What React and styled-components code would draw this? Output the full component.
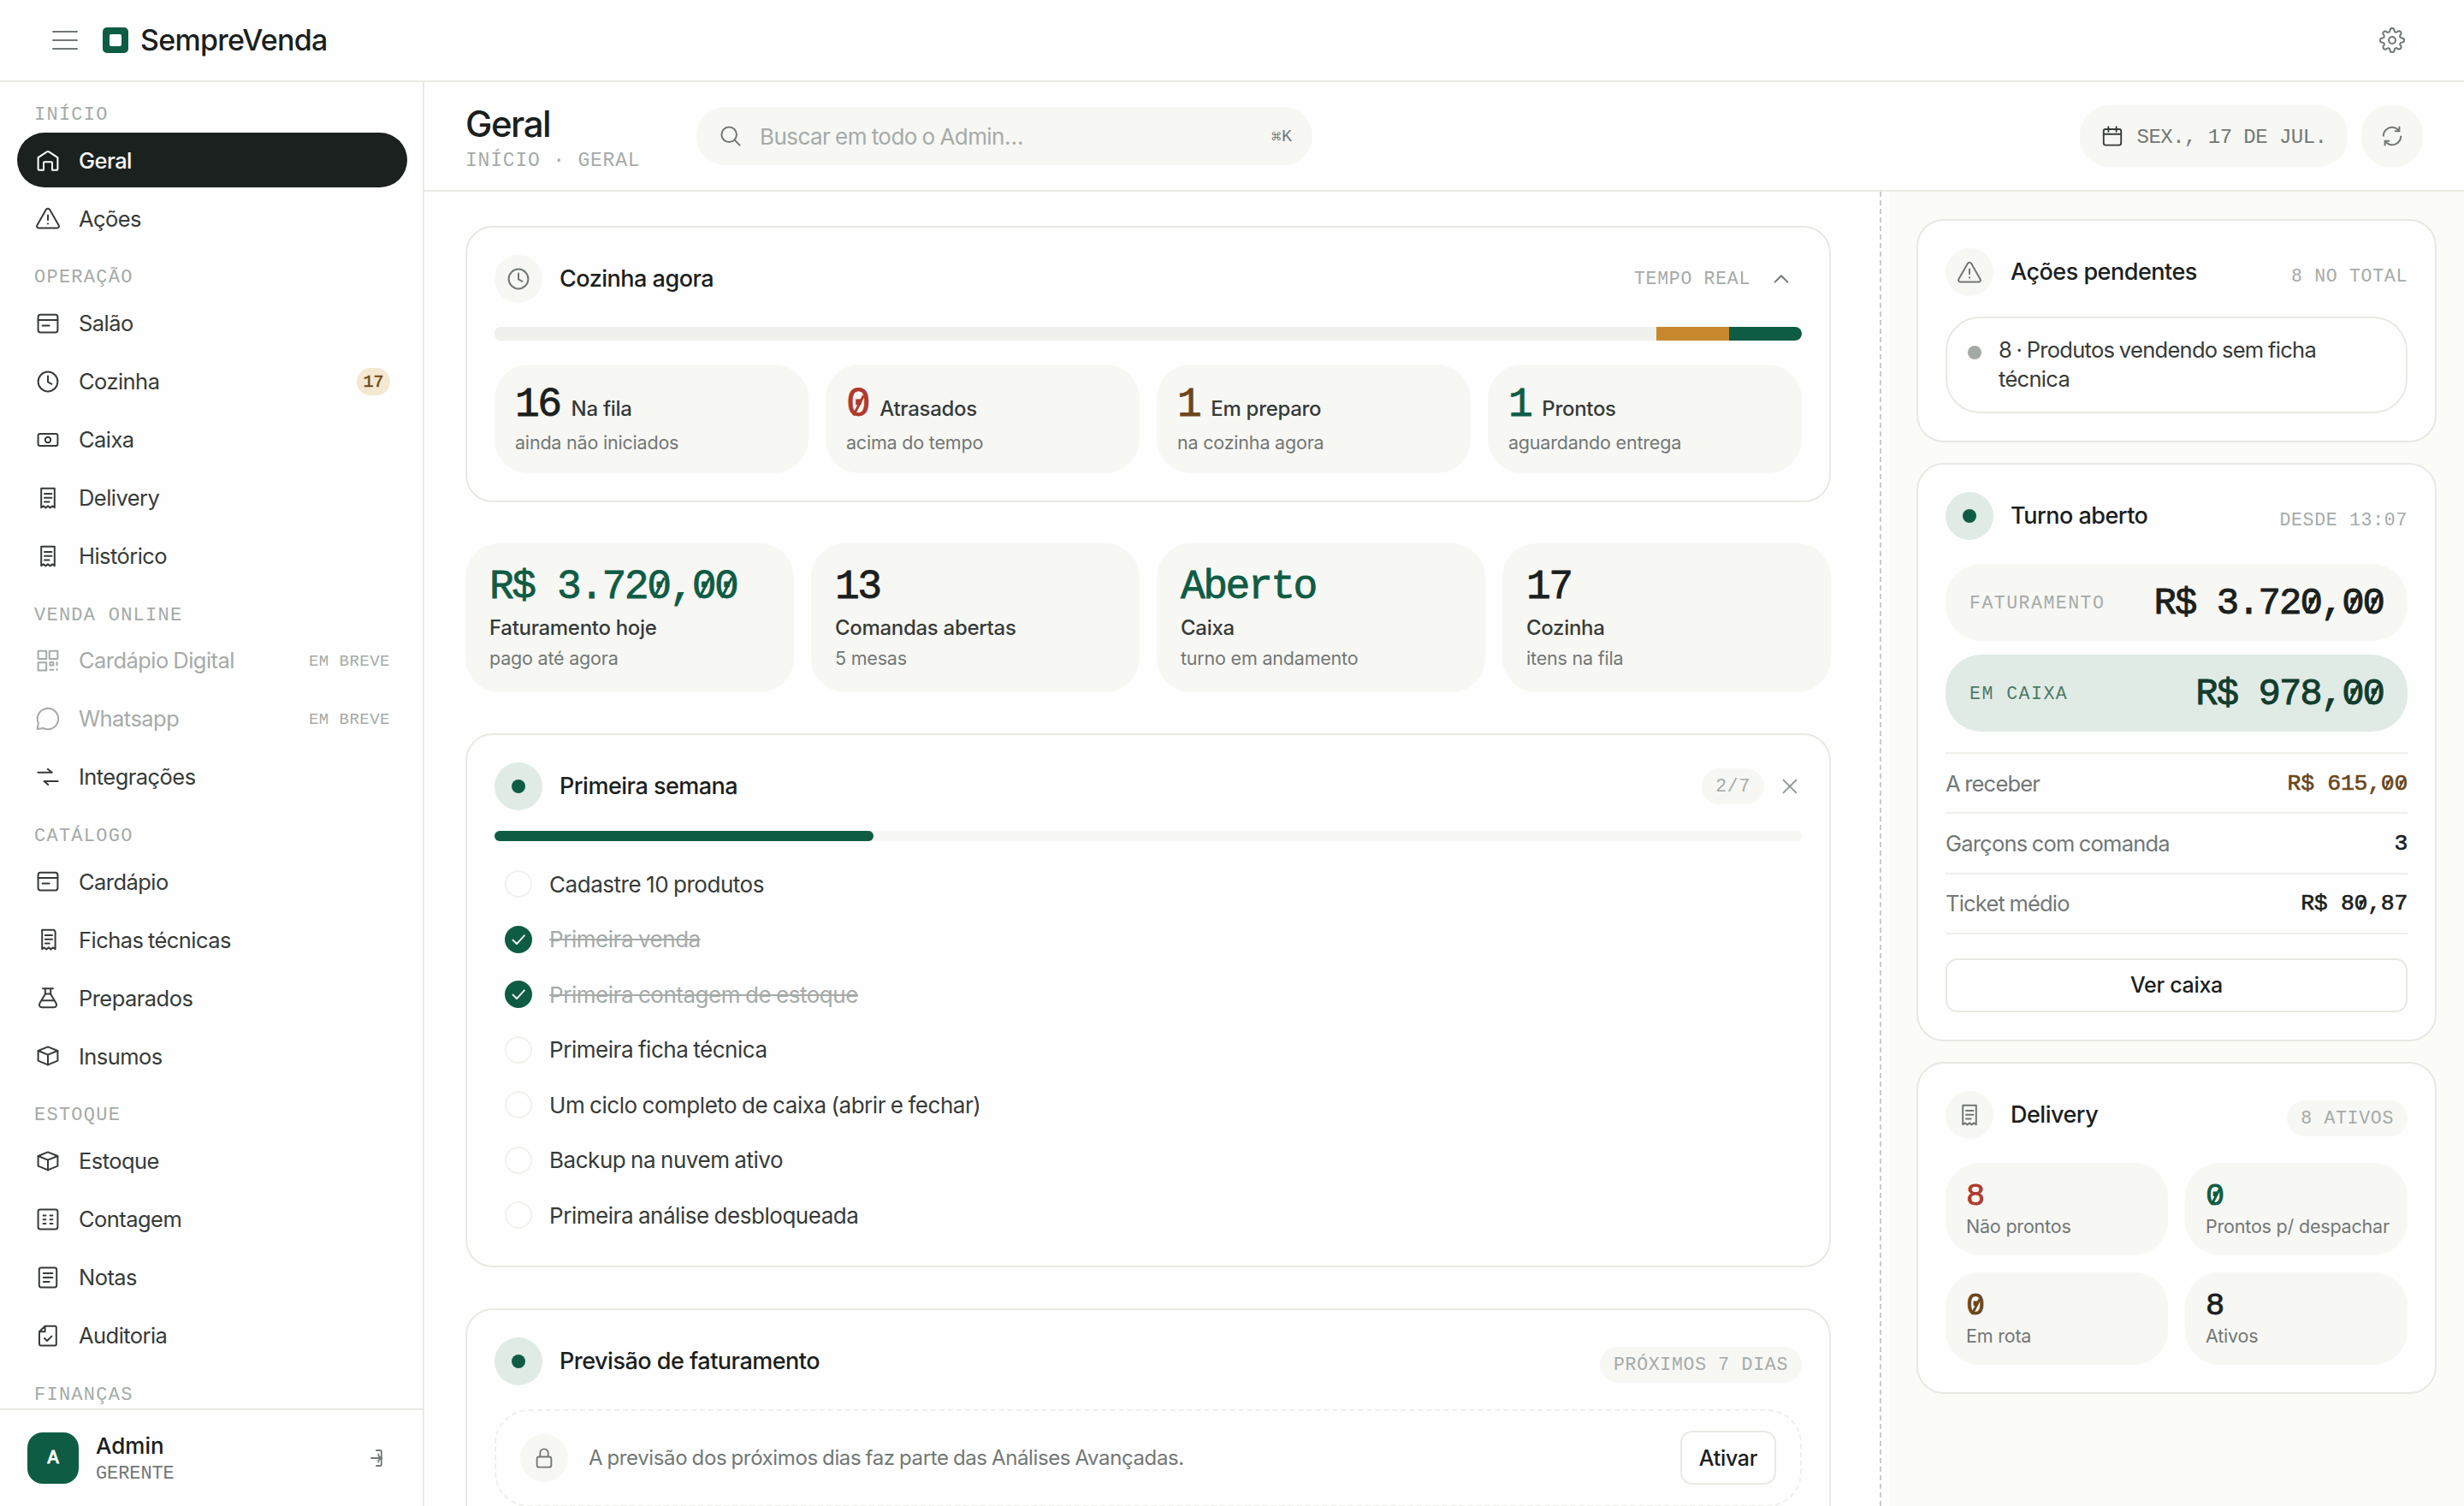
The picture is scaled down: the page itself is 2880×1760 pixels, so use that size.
import React from 'react';
import styled, { createGlobalStyle, css } from 'styled-components';

const color = {
  page: '#fefefe',
  ink: '#1a201d',
  text: '#363b38',
  muted: '#727875',
  faint: '#a5aba8',
  line: '#e9e9e3',
  surface: '#f7f7f4',
  side: '#fbfcf8',
  green: '#0f5c45',
  greenDark: '#123d2e',
  greenTint: '#e0ebe5',
  amber: '#c8872d',
  brown: '#6b471a',
  red: '#b03a2e',
};

const sans = `Inter, 'Liberation Sans', sans-serif`;
const mono = `'Liberation Mono', 'DejaVu Sans Mono', monospace`;

const GlobalStyle = createGlobalStyle`
  * { box-sizing: border-box; }
  body {
    margin: 0;
    background: ${color.page};
    color: ${color.ink};
    font-family: ${sans};
    overflow: hidden;
  }
  button { font-family: inherit; cursor: pointer; }
`;

/* ---------- Icons ---------- */

const Svg = styled.svg`
  display: block;
  flex: none;
  fill: none;
  stroke: currentColor;
  stroke-width: ${(p) => p.$stroke || 2};
  stroke-linecap: round;
  stroke-linejoin: round;
`;

const shapes = {
  home: <path d="M2.6 11.2 12.8 4.4a2.2 2.2 0 0 1 2.4 0l10.2 6.8V24.6a1.2 1.2 0 0 1-1.2 1.2H19V17.2a1 1 0 0 0-1-1h-8a1 1 0 0 0-1 1v8.6H3.8a1.2 1.2 0 0 1-1.2-1.2Z" />,
  alert: (
    <>
      <path d="M11.8 4 1.4 22.3a2.2 2.2 0 0 0 1.9 3.3h21.4a2.2 2.2 0 0 0 1.9-3.3L16.2 4a2.5 2.5 0 0 0-4.4 0Z" />
      <path d="M14 10.5v5.5M14 20.2v.2" />
    </>
  ),
  card: (
    <>
      <rect x="2.6" y="3.8" width="22.8" height="20.6" rx="2.6" />
      <path d="M2.6 10h22.8M7.6 16.4h8" />
    </>
  ),
  clock: (
    <>
      <circle cx="14" cy="14" r="11.4" />
      <path d="M14 7.4v7l4.4 2.4" />
    </>
  ),
  cash: (
    <>
      <rect x="2.6" y="7" width="22.8" height="14" rx="2" />
      <circle cx="14" cy="14" r="3.2" />
    </>
  ),
  receipt: (
    <>
      <path d="M6.2 2.8h15.6v22.4l-2.6-1.8-2.6 2-2.6-2-2.6 2-2.6-2-2.6 1.8Z" />
      <path d="M10 9h8.4M10 13.8h8.4M10 18.6h5.6" />
    </>
  ),
  recipe: (
    <>
      <path d="M7.2 2.8H20a2.6 2.6 0 0 1 2.6 2.6v19.8L20 23.4l-2.6 2-2.6-2-2.6 2-2.4-2-2.6 1.8Z" />
      <path d="M10.8 9h8.2M10.8 13.8h8.2M10.8 18.6h5" />
    </>
  ),
  qr: (
    <>
      <path d="M2.6 2.8h9.6v9.2H2.6ZM15.8 2.8h9.6v9.2h-9.6ZM2.6 16.2h9.6v9.2H2.6Z" />
      <path d="M16.4 16h4v3.4h-4ZM16.4 24.8h4M24.6 16v3.6M24.6 24v1" />
    </>
  ),
  chat: <path d="M1.6 26 2.9 19.2A12.2 12.2 0 1 1 8.6 25Z" />,
  swap: <path d="M2.4 8.8h16.4l-5-4M25.6 19H9.6l4.6 4" />,
  flask: (
    <>
      <path d="M8 3.2h12M10.8 3.2v6.6L4.4 20.6a3 3 0 0 0 2.6 4.6h14a3 3 0 0 0 2.6-4.6L17.2 9.8V3.2" />
      <path d="M10.8 9.6h6.4M7.4 17.2h13.2" />
    </>
  ),
  box: (
    <>
      <path d="M14 3.4 25.4 8v11.6L14 24.4 2.6 19.6V8Z" />
      <path d="M2.6 8 14 12.6 25.4 8M14 12.6v11.8" />
    </>
  ),
  count: (
    <>
      <rect x="2.6" y="2.6" width="22.8" height="22.8" rx="2.4" />
      <path d="M8.6 9.4h2.8M16.6 9.4h2.8M8.6 14.2h2.8M16.6 14.2h2.8M8.6 19h2.8M16.6 19h2.8" />
    </>
  ),
  notes: (
    <>
      <rect x="3.8" y="2.6" width="20.4" height="22.8" rx="2.4" />
      <path d="M8.8 9h10.6M8.8 14h10.6M8.8 19h6.8" />
    </>
  ),
  audit: (
    <>
      <path d="M10.6 2.8h11.8a1.4 1.4 0 0 1 1.4 1.4v19.8a1.4 1.4 0 0 1-1.4 1.4H5.4A1.4 1.4 0 0 1 4 24V9.2ZM10.6 2.8v6.4H4" />
      <path d="m10 17 3 3 5.4-5.4" />
    </>
  ),
  search: (
    <>
      <circle cx="12.2" cy="12.2" r="8.8" />
      <path d="m18.8 18.8 5.8 5.8" />
    </>
  ),
  calendar: (
    <>
      <rect x="3" y="5.4" width="22" height="20" rx="2.4" />
      <path d="M3 11.6h22M9 2.4v6M19 2.4v6" />
    </>
  ),
  refresh: (
    <>
      <path d="M3.8 13.6A10.2 10.2 0 0 1 20.6 6.2l1.6 1.6M24.2 14.4A10.2 10.2 0 0 1 7.4 21.8l-1.6-1.6" />
      <path d="M22.4 3.4v4.8h-4.6M5.6 24.6v-4.8h4.6" />
    </>
  ),
  lock: (
    <>
      <rect x="5" y="12.4" width="18" height="13" rx="2.6" />
      <path d="M9 12.2V7.6a5 5 0 0 1 10 0v4.6" />
    </>
  ),
  check: <path d="m7 14.6 4.8 4.8L21.4 9" />,
  chevronUp: <path d="m6.6 17.6 7.4-7.4 7.4 7.4" />,
  close: <path d="m6 6 16 16M22 6 6 22" />,
  menu: <path d="M0 4h28M0 14h28M0 24h28" />,
  logout: <path d="M18 5h4.6a1.2 1.2 0 0 1 1.2 1.2v15.6a1.2 1.2 0 0 1-1.2 1.2H18M12 14h12.4M20.4 9.4v2l3.8 2.6-3.8 2.6v2" />,
  gear: (
    <g transform="translate(-.28 -.28) scale(1.19)">
      <circle cx="12" cy="12" r="3.1" />
      <path d="M19.4 15a1.65 1.65 0 0 0 .33 1.82l.06.06a2 2 0 0 1 0 2.83 2 2 0 0 1-2.83 0l-.06-.06a1.65 1.65 0 0 0-1.82-.33 1.65 1.65 0 0 0-1 1.51V21a2 2 0 0 1-2 2 2 2 0 0 1-2-2v-.09A1.65 1.65 0 0 0 9 19.4a1.65 1.65 0 0 0-1.82.33l-.06.06a2 2 0 0 1-2.83 0 2 2 0 0 1 0-2.83l.06-.06a1.65 1.65 0 0 0 .33-1.82 1.65 1.65 0 0 0-1.51-1H3a2 2 0 0 1-2-2 2 2 0 0 1 2-2h.09A1.65 1.65 0 0 0 4.6 9a1.65 1.65 0 0 0-.33-1.82l-.06-.06a2 2 0 0 1 0-2.83 2 2 0 0 1 2.83 0l.06.06a1.65 1.65 0 0 0 1.82.33H9a1.65 1.65 0 0 0 1-1.51V3a2 2 0 0 1 2-2 2 2 0 0 1 2 2v.09a1.65 1.65 0 0 0 1 1.51 1.65 1.65 0 0 0 1.82-.33l.06-.06a2 2 0 0 1 2.83 0 2 2 0 0 1 0 2.83l-.06.06a1.65 1.65 0 0 0-.33 1.82V9a1.65 1.65 0 0 0 1.51 1H21a2 2 0 0 1 2 2 2 2 0 0 1-2 2h-.09a1.65 1.65 0 0 0-1.51 1z" />
    </g>
  ),
};

const Icon = ({ name, size = 28, stroke }) => (
  <Svg width={size} height={size} viewBox="0 0 28 28" $stroke={stroke} overflow="visible">
    {shapes[name]}
  </Svg>
);

/* ---------- Slashed zero for money and counters ---------- */

const Zero = styled.span`
  position: relative;

  &::after {
    content: '';
    position: absolute;
    top: 50%;
    left: 0.27em;
    width: 0.07em;
    height: 0.54em;
    margin-top: -0.24em;
    background: currentColor;
    transform: rotate(27deg);
  }
`;

const Digits = ({ children }) =>
  String(children)
    .split(/(0)/)
    .filter(Boolean)
    .map((part, i) => (part === '0' ? <Zero key={i}>0</Zero> : part));

/* ---------- Top bar ---------- */

const Shell = styled.div`
  display: flex;
  flex-direction: column;
  width: 2880px;
  height: 1760px;
  overflow: hidden;
`;

const TopBar = styled.header`
  display: flex;
  align-items: center;
  height: 96px;
  padding: 0 69px 0 62px;
  border-bottom: 2px solid ${color.line};
  color: ${color.muted};
`;

const LogoMark = styled.div`
  display: flex;
  align-items: center;
  justify-content: center;
  width: 30px;
  height: 30px;
  margin-left: 30px;
  border-radius: 5px;
  background: ${color.green};

  &::after {
    content: '';
    width: 14px;
    height: 14px;
    border-radius: 2px;
    background: #fff;
  }
`;

const Brand = styled.span`
  flex: 1;
  margin-left: 14px;
  color: ${color.ink};
  font-size: 34px;
  font-weight: 500;
  line-height: 40px;
  letter-spacing: -0.75px;
`;

const Body = styled.div`
  display: flex;
  flex: 1;
  min-height: 0;
`;

/* ---------- Sidebar ---------- */

const Sidebar = styled.aside`
  display: flex;
  flex-direction: column;
  width: 496px;
  border-right: 2px solid ${color.line};
`;

const Nav = styled.nav`
  flex: 1;
  min-height: 0;
  padding: 0.8px 18px 0 20px;
  overflow: hidden;
`;

const NavLabel = styled.div`
  height: 58.4px;
  padding: 24px 0 0 20px;
  color: ${color.faint};
  font-family: ${mono};
  font-size: 22px;
  line-height: 28px;
  letter-spacing: 1.25px;
`;

const NavList = styled.div`
  display: flex;
  flex-direction: column;
  gap: 4px;
`;

const NavItem = styled.a`
  display: flex;
  align-items: center;
  gap: 22px;
  height: 64px;
  padding: 0 20px 0 22px;
  border-radius: 32px;
  color: ${color.text};
  font-size: 25.5px;
  letter-spacing: -0.55px;
  word-spacing: -1px;
  ${(p) => p.$active && css`
    background: #1a211e;
    color: #fff;
    font-weight: 500;
  `}
  ${(p) => p.$soon && css`
    color: ${color.faint};
  `}
`;

const NavText = styled.span`
  flex: 1;
`;

const NavCount = styled.span`
  display: flex;
  align-items: center;
  justify-content: center;
  width: 39px;
  height: 32px;
  padding-top: 1px;
  border-radius: 16px;
  background: #f5e8d0;
  color: ${color.brown};
  font-family: ${mono};
  font-size: 20px;
  letter-spacing: 0;
  -webkit-text-stroke: 0.5px;
`;

const NavSoon = styled.span`
  padding-top: 2px;
  font-family: ${mono};
  font-size: 19px;
  letter-spacing: 0.48px;
  word-spacing: 0;
`;

const UserBar = styled.div`
  display: flex;
  align-items: center;
  height: 114px;
  padding: 0 44px 0 32px;
  border-top: 2px solid ${color.line};
  color: ${color.muted};
`;

const Avatar = styled.div`
  display: flex;
  align-items: center;
  justify-content: center;
  width: 60px;
  height: 60px;
  border-radius: 18px;
  background: ${color.green};
  color: #fff;
  font-family: ${mono};
  font-size: 22px;
  -webkit-text-stroke: 0.9px;
`;

const UserInfo = styled.div`
  flex: 1;
  margin-left: 20px;
  padding-top: 3px;
`;

const UserName = styled.div`
  color: ${color.ink};
  font-size: 26px;
  font-weight: 500;
  line-height: 34px;
`;

const UserRole = styled.div`
  font-family: ${mono};
  font-size: 22px;
  line-height: 32px;
  letter-spacing: -0.1px;
`;

/* ---------- Page header ---------- */

const Page = styled.main`
  display: flex;
  flex: 1;
  flex-direction: column;
  min-width: 0;
`;

const PageHeader = styled.div`
  display: flex;
  align-items: center;
  height: 128px;
  padding: 0 48px;
  border-bottom: 2px solid ${color.line};
`;

const Heading = styled.div`
  width: 270px;
  padding-top: 9px;
`;

const PageTitle = styled.h1`
  margin: 0;
  font-size: 42px;
  font-weight: 500;
  line-height: 48px;
  letter-spacing: -1.5px;
`;

const Crumbs = styled.div`
  color: ${color.faint};
  font-family: ${mono};
  font-size: 23px;
  line-height: 38px;
  letter-spacing: 0.8px;
`;

const SearchBox = styled.div`
  display: flex;
  align-items: center;
  gap: 20px;
  width: 720px;
  height: 68px;
  margin-right: auto;
  padding: 0 24px 0 26px;
  border-radius: 34px;
  background: ${color.surface};
  color: ${color.muted};
`;

const SearchHint = styled.span`
  flex: 1;
  color: ${color.faint};
  font-size: 26px;
  letter-spacing: -0.55px;
  word-spacing: -1px;
`;

const Shortcut = styled.kbd`
  display: flex;
  align-items: center;
  font-family: ${mono};
  font-size: 20px;

  span {
    font-family: 'DejaVu Sans', sans-serif;
    font-size: 13px;
  }
`;

const HeaderPill = styled.div`
  display: flex;
  align-items: center;
  justify-content: center;
  gap: 16px;
  width: ${(p) => p.$width}px;
  height: 72px;
  border-radius: 34px;
  background: ${color.surface};
  color: ${color.muted};

  & + & {
    margin-left: 16px;
  }
`;

const DateText = styled.span`
  padding-top: 2px;
  font-family: ${mono};
  font-size: 24px;
  letter-spacing: -0.54px;
`;

const Dark = styled.span`
  color: ${color.text};
`;

/* ---------- Columns and cards ---------- */

const Columns = styled.div`
  display: flex;
  flex: 1;
  min-height: 0;
`;

const MainColumn = styled.section`
  display: flex;
  flex-direction: column;
  gap: 48px;
  width: 1692px;
  padding: 40px 48px 0;
  overflow: hidden;
`;

const Resizer = styled.div`
  display: flex;
  justify-content: center;
  width: 20px;

  &::after {
    content: '';
    width: 2px;
    background: repeating-linear-gradient(#c9ccca 0 6px, transparent 6px 10px);
  }
`;

const SideColumn = styled.aside`
  display: flex;
  flex: 1;
  flex-direction: column;
  gap: 24px;
  padding: 32px;
  background: ${color.side};
`;

const Card = styled.article`
  flex: none;
  padding: 32px 32px ${(p) => p.$bottom || 32}px;
  border: 2px solid ${color.line};
  border-radius: 32px;
  background: ${color.page};
`;

const CardHead = styled.div`
  display: flex;
  align-items: center;
  height: 56px;
`;

const CardIcon = styled.div`
  display: flex;
  flex: none;
  align-items: center;
  justify-content: center;
  width: 56px;
  height: 56px;
  border-radius: 50%;
  background: ${(p) => (p.$live ? color.greenTint : color.surface)};
  color: ${color.muted};
`;

const LiveDot = styled.span`
  width: 16px;
  height: 16px;
  border-radius: 50%;
  background: ${color.green};
`;

const CardTitle = styled.h2`
  flex: 1;
  margin: 0 0 1px 20px;
  font-size: 27px;
  font-weight: 500;
  letter-spacing: -0.5px;
`;

const CardMeta = styled.span`
  margin-top: ${(p) => p.$drop || 0}px;
  color: ${color.faint};
  font-family: ${mono};
  font-size: 21.5px;
  letter-spacing: 0.7px;
  white-space: nowrap;
  ${(p) => p.$pill && css`
    padding: 1px 16px 0;
    border-radius: 21px;
    background: ${color.surface};
    line-height: 41px;
  `}
`;

const IconButton = styled.button`
  display: flex;
  align-items: center;
  justify-content: center;
  width: ${(p) => p.$size}px;
  height: ${(p) => p.$size}px;
  margin-left: ${(p) => p.$gap}px;
  padding: 0;
  border: none;
  background: transparent;
  color: ${(p) => p.$tone || color.muted};
`;

const StackBar = styled.div`
  display: flex;
  height: 16px;
  margin: 28px 0;
  border-radius: 8px;
  background: #f0f0ec;
  overflow: hidden;
`;

const Segment = styled.div`
  flex: ${(p) => p.$share};
  background: ${(p) => p.$tone};
`;

const Grid = styled.div`
  display: grid;
  grid-template-columns: repeat(${(p) => p.$cols}, minmax(0, 1fr));
  gap: 20px;
  margin-top: ${(p) => p.$top || 0}px;
`;

const Tile = styled.div`
  height: ${(p) => p.$height}px;
  padding: ${(p) => p.$pad};
  border-radius: 40px;
  background: ${color.surface};
  white-space: nowrap;
`;

const Figure = styled.div`
  color: ${(p) => p.$tone || color.ink};
  font-family: ${mono};
  font-size: ${(p) => p.$size || 48}px;
  line-height: ${(p) => (p.$size ? 40 : 48)}px;
  letter-spacing: ${(p) => (p.$size ? 0 : -2.5)}px;
  -webkit-text-stroke: 0.8px;
`;

const FigureRow = styled.div`
  display: flex;
  align-items: baseline;
  gap: 13px;
`;

const TileLabel = styled.div`
  margin-top: ${(p) => p.$gap || 0}px;
  color: ${color.text};
  font-size: 24px;
  font-weight: 500;
  line-height: 32px;
  letter-spacing: -0.3px;
`;

const TileNote = styled.div`
  margin-top: ${(p) => p.$gap || 0}px;
  color: ${color.muted};
  font-size: 21.5px;
  line-height: 30px;
  letter-spacing: -0.2px;
`;

/* ---------- First week checklist ---------- */

const Progress = styled.div`
  height: 12px;
  margin: 24px 0 18px;
  border-radius: 6px;
  background: ${color.surface};
`;

const ProgressFill = styled.div`
  width: 29%;
  height: 12px;
  border-radius: 6px;
  background: ${color.green};
`;

const Task = styled.div`
  display: flex;
  align-items: center;
  gap: 20px;
  height: 64.5px;
  padding-left: 12px;
  color: ${(p) => (p.$done ? color.faint : color.text)};
  font-size: 26px;
  letter-spacing: -0.46px;
  word-spacing: -1px;
  text-decoration: ${(p) => (p.$done ? 'line-through' : 'none')};
`;

const TaskMark = styled.span`
  display: flex;
  align-items: center;
  justify-content: center;
  width: 32px;
  height: 32px;
  border: 2px solid ${(p) => (p.$done ? color.green : '#f1f1ed')};
  border-radius: 50%;
  background: ${(p) => (p.$done ? color.green : 'transparent')};
  color: #fff;
`;

const LockedBox = styled.div`
  display: flex;
  align-items: center;
  height: 114px;
  margin-top: 28px;
  padding: 0 28px;
  border: 2px dashed #efefeb;
  border-radius: 40px;
`;

const LockedText = styled.p`
  flex: 1;
  margin: 0 0 0 24px;
  color: ${color.muted};
  font-size: 24px;
  letter-spacing: -0.38px;
  word-spacing: -1px;
`;

const OutlineButton = styled.button`
  width: ${(p) => p.$width};
  height: 63px;
  border: 2px solid ${color.line};
  border-radius: 14px;
  background: #fff;
  color: ${color.ink};
  font-size: 25px;
  font-weight: 500;
  letter-spacing: -0.3px;
`;

/* ---------- Side column parts ---------- */

const PendingItem = styled.div`
  display: flex;
  align-items: flex-start;
  gap: 20px;
  height: 113px;
  margin-top: 24px;
  padding: 20px 24px;
  border: 2px solid ${color.line};
  border-radius: 40px;
  color: ${color.text};
  font-size: 25.5px;
  line-height: 34px;
  letter-spacing: -0.7px;
  word-spacing: -1px;
`;

const PendingDot = styled.span`
  flex: none;
  width: 16px;
  height: 16px;
  margin-top: 12px;
  border-radius: 50%;
  background: #a3aaa6;
`;

const Amount = styled.div`
  display: flex;
  align-items: center;
  justify-content: space-between;
  height: 90px;
  margin-top: ${(p) => p.$gap}px;
  padding: 2px 28px 0;
  border-radius: 42px;
  background: ${(p) => (p.$strong ? color.greenTint : color.surface)};
  color: ${(p) => (p.$strong ? color.greenDark : color.ink)};
`;

const AmountLabel = styled.span`
  color: ${(p) => (p.$strong ? '#4d7a68' : color.faint)};
  font-family: ${mono};
  font-size: 21.5px;
  letter-spacing: 1.5px;
`;

const AmountValue = styled.span`
  font-family: ${mono};
  font-size: 44px;
  line-height: 50px;
  letter-spacing: -2px;
  -webkit-text-stroke: 0.9px;
`;

const Facts = styled.dl`
  margin: 24px 0 28px;
  border-top: 2px solid #efefeb;
`;

const Fact = styled.div`
  display: flex;
  align-items: center;
  justify-content: space-between;
  height: 70.33px;
  border-bottom: 2px solid #efefeb;
`;

const FactName = styled.dt`
  color: ${color.muted};
  font-size: 25.5px;
  letter-spacing: -0.8px;
  word-spacing: -1px;
`;

const FactValue = styled.dd`
  margin: 0;
  padding-top: 1px;
  color: ${(p) => p.$tone || color.ink};
  font-family: ${mono};
  font-size: 26.5px;
  letter-spacing: -0.3px;
  -webkit-text-stroke: 0.6px;
`;

const sections = [
  { label: 'INÍCIO', items: [['home', 'Geral', { active: true }], ['alert', 'Ações']] },
  {
    label: 'OPERAÇÃO',
    items: [
      ['card', 'Salão'],
      ['clock', 'Cozinha', { count: 17 }],
      ['cash', 'Caixa'],
      ['receipt', 'Delivery'],
      ['receipt', 'Histórico'],
    ],
  },
  {
    label: 'VENDA ONLINE',
    items: [
      ['qr', 'Cardápio Digital', { soon: true }],
      ['chat', 'Whatsapp', { soon: true }],
      ['swap', 'Integrações'],
    ],
  },
  {
    label: 'CATÁLOGO',
    items: [
      ['card', 'Cardápio'],
      ['recipe', 'Fichas técnicas'],
      ['flask', 'Preparados'],
      ['box', 'Insumos'],
    ],
  },
  {
    label: 'ESTOQUE',
    items: [
      ['box', 'Estoque'],
      ['count', 'Contagem'],
      ['notes', 'Notas'],
      ['audit', 'Auditoria'],
    ],
  },
  { label: 'FINANÇAS', items: [] },
];

const kitchen = [
  { value: 16, label: 'Na fila', note: 'ainda não iniciados' },
  { value: 0, label: 'Atrasados', note: 'acima do tempo', tone: color.red },
  { value: 1, label: 'Em preparo', note: 'na cozinha agora', tone: color.brown },
  { value: 1, label: 'Prontos', note: 'aguardando entrega', tone: color.green },
];

const kpis = [
  { value: 'R$ 3.720,00', label: 'Faturamento hoje', note: 'pago até agora', tone: color.green },
  { value: '13', label: 'Comandas abertas', note: '5 mesas' },
  { value: 'Aberto', label: 'Caixa', note: 'turno em andamento', tone: color.green },
  { value: '17', label: 'Cozinha', note: 'itens na fila' },
];

const tasks = [
  ['Cadastre 10 produtos', false],
  ['Primeira venda', true],
  ['Primeira contagem de estoque', true],
  ['Primeira ficha técnica', false],
  ['Um ciclo completo de caixa (abrir e fechar)', false],
  ['Backup na nuvem ativo', false],
  ['Primeira análise desbloqueada', false],
];

const delivery = [
  { value: 8, note: 'Não prontos', tone: color.red },
  { value: 0, note: 'Prontos p/ despachar', tone: color.green },
  { value: 0, note: 'Em rota', tone: color.brown },
  { value: 8, note: 'Ativos' },
];

const LiveIcon = () => (
  <CardIcon $live>
    <LiveDot />
  </CardIcon>
);

const SideMenu = () => (
  <Sidebar>
    <Nav>
      {sections.map((section) => (
        <React.Fragment key={section.label}>
          <NavLabel>{section.label}</NavLabel>
          <NavList>
            {section.items.map(([icon, text, opts = {}]) => (
              <NavItem key={text} $active={opts.active} $soon={opts.soon}>
                <Icon name={icon} />
                <NavText>{text}</NavText>
                {opts.count && <NavCount>{opts.count}</NavCount>}
                {opts.soon && <NavSoon>EM BREVE</NavSoon>}
              </NavItem>
            ))}
          </NavList>
        </React.Fragment>
      ))}
    </Nav>
    <UserBar>
      <Avatar>A</Avatar>
      <UserInfo>
        <UserName>Admin</UserName>
        <UserRole>GERENTE</UserRole>
      </UserInfo>
      <Icon name="logout" stroke={1.8} />
    </UserBar>
  </Sidebar>
);

export default function App() {
  return (
    <Shell>
      <GlobalStyle />
      <TopBar>
        <Icon name="menu" />
        <LogoMark />
        <Brand>SempreVenda</Brand>
        <Icon name="gear" size={30} stroke={1.6} />
      </TopBar>
      <Body>
        <SideMenu />
        <Page>
          <PageHeader>
            <Heading>
              <PageTitle>Geral</PageTitle>
              <Crumbs>INÍCIO · GERAL</Crumbs>
            </Heading>
            <SearchBox>
              <Icon name="search" />
              <SearchHint>Buscar em todo o Admin…</SearchHint>
              <Shortcut><span>⌘</span>K</Shortcut>
            </SearchBox>
            <HeaderPill $width={313}>
              <Dark><Icon name="calendar" size={26} /></Dark>
              <DateText>SEX., 17 DE JUL.</DateText>
            </HeaderPill>
            <HeaderPill $width={72}>
              <Icon name="refresh" size={28} />
            </HeaderPill>
          </PageHeader>
          <Columns>
            <MainColumn>
              <Card>
                <CardHead>
                  <CardIcon><Icon name="clock" /></CardIcon>
                  <CardTitle>Cozinha agora</CardTitle>
                  <CardMeta>TEMPO REAL</CardMeta>
                  <IconButton $size={48} $gap={12}><Icon name="chevronUp" size={28} /></IconButton>
                </CardHead>
                <StackBar>
                  <Segment $share={16} $tone="#f0f0ec" />
                  <Segment $share={1} $tone={color.amber} />
                  <Segment $share={1} $tone={color.green} />
                </StackBar>
                <Grid $cols={4}>
                  {kitchen.map((k) => (
                    <Tile key={k.label} $height={127} $pad="23px 24px 0">
                      <FigureRow>
                        <Figure $tone={k.tone}><Digits>{k.value}</Digits></Figure>
                        <TileLabel>{k.label}</TileLabel>
                      </FigureRow>
                      <TileNote $gap={5}>{k.note}</TileNote>
                    </Tile>
                  ))}
                </Grid>
              </Card>

              <Grid $cols={4}>
                {kpis.map((k) => (
                  <Tile key={k.label} $height={174} $pad="27px 28px 0">
                    <Figure $tone={k.tone}><Digits>{k.value}</Digits></Figure>
                    <TileLabel $gap={8}>{k.label}</TileLabel>
                    <TileNote $gap={4}>{k.note}</TileNote>
                  </Tile>
                ))}
              </Grid>

              <Card $bottom={26}>
                <CardHead>
                  <LiveIcon />
                  <CardTitle>Primeira semana</CardTitle>
                  <CardMeta $pill>2/7</CardMeta>
                  <IconButton $size={28} $gap={16} $tone="#8d9490"><Icon name="close" size={26} /></IconButton>
                </CardHead>
                <Progress><ProgressFill /></Progress>
                {tasks.map(([text, done]) => (
                  <Task key={text} $done={done}>
                    <TaskMark $done={done}>{done && <Icon name="check" size={26} />}</TaskMark>
                    {text}
                  </Task>
                ))}
              </Card>

              <Card>
                <CardHead>
                  <LiveIcon />
                  <CardTitle>Previsão de faturamento</CardTitle>
                  <CardMeta $pill $drop={8}>PRÓXIMOS 7 DIAS</CardMeta>
                </CardHead>
                <LockedBox>
                  <CardIcon><Icon name="lock" size={26} /></CardIcon>
                  <LockedText>A previsão dos próximos dias faz parte das Análises Avançadas.</LockedText>
                  <OutlineButton $width="112px">Ativar</OutlineButton>
                </LockedBox>
              </Card>
            </MainColumn>

            <Resizer />

            <SideColumn>
              <Card>
                <CardHead>
                  <CardIcon><Icon name="alert" /></CardIcon>
                  <CardTitle>Ações pendentes</CardTitle>
                  <CardMeta $drop={9}>8 NO TOTAL</CardMeta>
                </CardHead>
                <PendingItem>
                  <PendingDot />
                  <span>8 · Produtos vendendo sem ficha técnica</span>
                </PendingItem>
              </Card>

              <Card>
                <CardHead>
                  <LiveIcon />
                  <CardTitle>Turno aberto</CardTitle>
                  <CardMeta $drop={9}>DESDE 13:07</CardMeta>
                </CardHead>
                <Amount $gap={28}>
                  <AmountLabel>FATURAMENTO</AmountLabel>
                  <AmountValue><Digits>R$ 3.720,00</Digits></AmountValue>
                </Amount>
                <Amount $gap={16} $strong>
                  <AmountLabel $strong>EM CAIXA</AmountLabel>
                  <AmountValue><Digits>R$ 978,00</Digits></AmountValue>
                </Amount>
                <Facts>
                  <Fact>
                    <FactName>A receber</FactName>
                    <FactValue $tone={color.brown}><Digits>R$ 615,00</Digits></FactValue>
                  </Fact>
                  <Fact>
                    <FactName>Garçons com comanda</FactName>
                    <FactValue>3</FactValue>
                  </Fact>
                  <Fact>
                    <FactName>Ticket médio</FactName>
                    <FactValue><Digits>R$ 80,87</Digits></FactValue>
                  </Fact>
                </Facts>
                <OutlineButton $width="100%">Ver caixa</OutlineButton>
              </Card>

              <Card>
                <CardHead>
                  <CardIcon><Icon name="receipt" /></CardIcon>
                  <CardTitle>Delivery</CardTitle>
                  <CardMeta $pill $drop={8}>8 ATIVOS</CardMeta>
                </CardHead>
                <Grid $cols={2} $top={28}>
                  {delivery.map((d) => (
                    <Tile key={d.note} $height={108} $pad="19px 24px 0">
                      <Figure $size={37} $tone={d.tone}><Digits>{d.value}</Digits></Figure>
                      <TileNote>{d.note}</TileNote>
                    </Tile>
                  ))}
                </Grid>
              </Card>
            </SideColumn>
          </Columns>
        </Page>
      </Body>
    </Shell>
  );
}
